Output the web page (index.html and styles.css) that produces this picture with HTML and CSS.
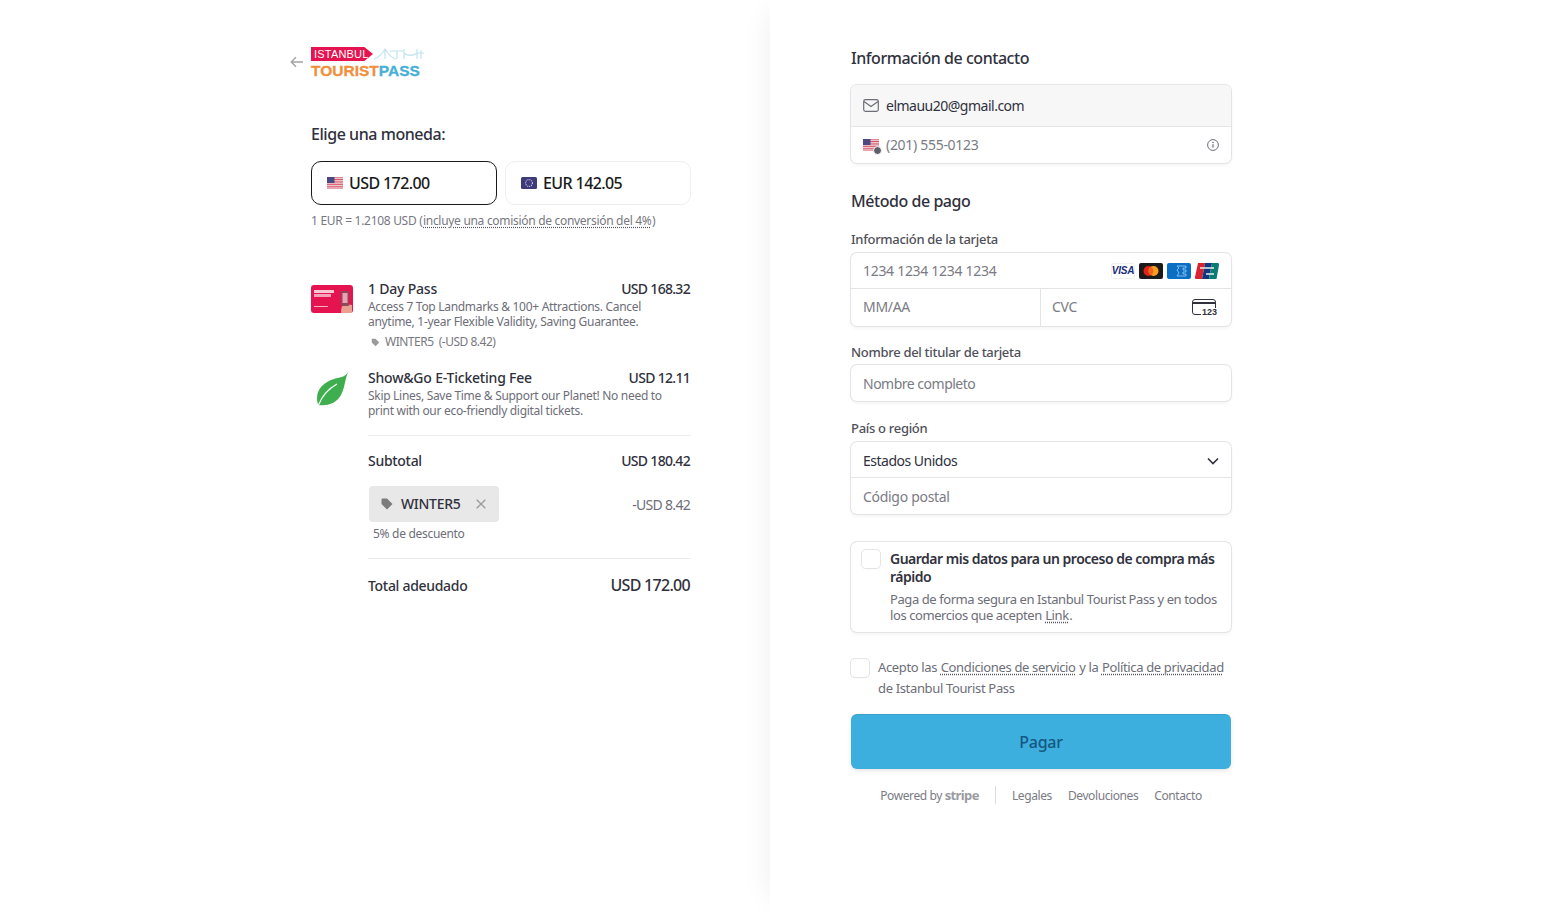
FILE: index.html
```html
<!DOCTYPE html>
<html lang="es">
<head>
  <meta charset="UTF-8" />
  <meta name="viewport" content="width=device-width, initial-scale=1.0" />
  <title>Istanbul Tourist Pass</title>
  <link rel="stylesheet" href="styles.css">
</head>
<body>
  <div class="checkout">
    <section class="summary">
      <div class="summary-inner">
        <header class="brand">
          <svg class="back" viewBox="0 0 14 12" width="14" height="12"><path d="M13 6H1.5M6 1.2 1.2 6 6 10.8" fill="none" stroke="#a3a3a3" stroke-width="1.4"/></svg>
          <div class="logo">
            <div class="logo-top">
              <span class="logo-flag">ISTANBUL</span>
              <svg viewBox="0 0 52 14" width="52" height="14"><path d="M1 12C6 11 9 7 12 2c3 5 6 9 11 10M12 2v10M17 4h14M24 4v8M31 2v10M44 2v10M31 6c4 3 9 3 13 0M44 6h7M48 3v9" fill="none" stroke="#bfe4f0" stroke-width="1.2"/></svg>
            </div>
            <div class="logo-bottom"><span class="logo-orange">TOURIST</span><span class="logo-blue">PASS</span></div>
          </div>
        </header>

        <h2 class="currency-title">Elige una moneda:</h2>
        <div class="currency-row">
          <button class="currency selected">
            <svg class="flag" viewBox="0 0 16 12" width="16" height="12"><use href="#us-flag"/></svg>
            USD 172.00
          </button>
          <button class="currency">
            <svg class="flag" viewBox="0 0 16 12" width="16" height="12">
              <rect width="16" height="12" rx="1.5" fill="#3f3b78"/>
              <circle cx="8" cy="6" r="3.4" fill="none" stroke="#c9c7e6" stroke-width="1.2" stroke-dasharray="1 1"/>
            </svg>
            EUR 142.05
          </button>
        </div>
        <p class="rate">1 EUR = 1.2108 USD (<span class="dotted">incluye una comisión de conversión del 4%</span>)</p>

        <div class="item first-item">
          <div class="thumb">
            <svg viewBox="0 0 42 28" width="42" height="28">
              <rect width="42" height="28" rx="3" fill="#e5134f"/>
              <rect x="3" y="5" width="20" height="3" fill="#f9c6d4"/>
              <rect x="3" y="9" width="17" height="3" fill="#f4a3bb"/>
              <rect x="3" y="21" width="14" height="1" fill="#f7b3c7"/>
              <path d="M30 28c0-5 1-8 3-9l8 1v8z" fill="#eaa08f"/>
              <rect x="30" y="6" width="8" height="15" rx="1" fill="#8b4a58"/>
              <rect x="31.5" y="8" width="5" height="10" fill="#e7a3b3"/>
            </svg>
          </div>
          <div class="item-body">
            <div class="item-head"><span>1 Day Pass</span><span class="price">USD 168.32</span></div>
            <p class="item-desc">Access 7 Top Landmarks &amp; 100+ Attractions. Cancel anytime, 1-year Flexible Validity, Saving Guarantee.</p>
            <p class="item-tag">
              <svg viewBox="0 0 12 12" width="9" height="9"><path d="M1 1h5l5 5-5 5-5-5z" fill="#9a9a9a"/></svg>
              WINTER5&nbsp; (-USD 8.42)
            </p>
          </div>
        </div>

        <div class="item second-item">
          <div class="thumb leaf">
            <svg viewBox="0 0 42 36" width="42" height="36">
              <path d="M37 1C34 6 30 6 23 8 13 11 6 18 6 27c0 3 .5 5 1.500 7C16 35 26 33 31 22 34 15 34 8 37 1z" fill="#3fae4f"/>
              <path d="M7.500 34C11 25 17 18 26 13" fill="none" stroke="#fff" stroke-width="1.200"/>
            </svg>
          </div>
          <div class="item-body">
            <div class="item-head"><span>Show&amp;Go E-Ticketing Fee</span><span class="price">USD 12.11</span></div>
            <p class="item-desc">Skip Lines, Save Time &amp; Support our Planet! No need to print with our eco-friendly digital tickets.</p>
          </div>
        </div>

        <div class="totals">
          <div class="total-row subtotal"><span>Subtotal</span><span class="price">USD 180.42</span></div>
          <div class="discount">
            <div>
              <span class="chip">
                <svg viewBox="0 0 12 12" width="12" height="12"><path d="M.5 1.500A1 1 0 0 1 1.500.5H6l5.500 5.500-5.500 5.500L.5 6z" fill="#7c7c7c"/></svg>
                <b>WINTER5</b>
                <svg viewBox="0 0 10 10" width="10" height="10"><path d="M.7.7l8.600 8.600M9.300.7.7 9.300" stroke="#9a9a9a" stroke-width="1.300"/></svg>
              </span>
              <p class="chip-note">5% de descuento</p>
            </div>
            <span class="discount-value price">-USD 8.42</span>
          </div>
          <div class="total-row grand"><span>Total adeudado</span><span class="grand-value">USD 172.00</span></div>
        </div>
      </div>
    </section>

    <section class="payment">
      <form class="payment-inner">
        <h2 class="section-title">Información de contacto</h2>
        <div class="box contact-box">
          <div class="row email-row">
            <svg viewBox="0 0 16 13" width="16" height="13"><rect x=".7" y=".7" width="14.600" height="11.600" rx="1.800" fill="none" stroke="#6d6e78" stroke-width="1.200"/><path d="M1 2.500l7 5 7-5" fill="none" stroke="#6d6e78" stroke-width="1.200"/></svg>
            <span class="email">elmauu20@gmail.com</span>
          </div>
          <div class="row phone-row">
            <span class="phone-flag">
              <svg viewBox="0 0 16 12" width="16" height="12"><use href="#us-flag"/></svg>
              <i class="flag-badge"></i>
            </span>
            <span class="placeholder grow">(201) 555-0123</span>
            <svg viewBox="0 0 12 12" width="12" height="12"><circle cx="6" cy="6" r="5.400" fill="none" stroke="#6d6e78"/><path d="M6 5.200v3.400" stroke="#6d6e78" stroke-width="1.200"/><circle cx="6" cy="3.500" r=".8" fill="#6d6e78"/></svg>
          </div>
        </div>

        <h2 class="section-title method-title">Método de pago</h2>
        <label class="field-label card-label">Información de la tarjeta</label>
        <div class="box card-box">
          <div class="row card-row card-number">
            <span class="placeholder grow">1234 1234 1234 1234</span>
            <span class="brands">
              <span class="brand-icon visa">VISA</span>
              <svg class="brand-svg" viewBox="0 0 24 16" width="24" height="16"><rect width="24" height="16" rx="2" fill="#1a1a1a"/><circle cx="9.500" cy="8" r="5" fill="#e2231a"/><circle cx="14.500" cy="8" r="5" fill="#f79e1b"/><path d="M12 3.700a5 5 0 0 1 0 8.600 5 5 0 0 1 0-8.600z" fill="#f2641d"/></svg>
              <svg class="brand-svg" viewBox="0 0 24 16" width="24" height="16"><rect width="24" height="16" rx="2" fill="#0a6fc4"/><path d="M10 3h9v2h-3v2h3v2h-3v2h3v2h-9l2-3-2-3 2-2z" fill="none" stroke="#9fd0f2" stroke-width=".8"/></svg>
              <svg class="brand-svg" viewBox="0 0 24 16" width="24" height="16"><path d="M3 0h7L7 16H1.500A1.500 1.500 0 0 1 0 14z" fill="#d9232e"/><path d="M10 0h7l-3 16H7z" fill="#12377f"/><path d="M17 0h5.500A1.500 1.500 0 0 1 24 2l-2.500 14H14z" fill="#0a7c74"/><path d="M5 5h14M11 11h8" stroke="#e8f2f2" stroke-width="1.400"/></svg>
            </span>
          </div>
          <div class="split">
            <div class="row card-row split-left"><span class="placeholder">MM/AA</span></div>
            <div class="row card-row cvc-row">
              <span class="placeholder grow">CVC</span>
              <span class="cvc-icon"><b>123</b></span>
            </div>
          </div>
        </div>

        <label class="field-label name-label">Nombre del titular de tarjeta</label>
        <div class="box name-box"><div class="row card-row"><span class="placeholder tight">Nombre completo</span></div></div>

        <label class="field-label country-label">País o región</label>
        <div class="box country-box">
          <div class="row card-row select-row">
            <span class="grow tight">Estados Unidos</span>
            <svg viewBox="0 0 12 8" width="12" height="8"><path d="M1 1.500l5 5 5-5" fill="none" stroke="#30313d" stroke-width="1.600"/></svg>
          </div>
          <div class="row card-row postal-row"><span class="placeholder">Código postal</span></div>
        </div>

        <div class="box save-box">
          <span class="checkbox"></span>
          <div>
            <p class="save-title">Guardar mis datos para un proceso de compra más rápido</p>
            <p class="save-text">Paga de forma segura en Istanbul Tourist Pass y en todos<br>los comercios que acepten <span class="dotted">Link</span>.</p>
          </div>
        </div>

        <div class="terms">
          <span class="checkbox"></span>
          <p>Acepto las <span class="dotted">Condiciones de servicio</span> y la <span class="dotted">Política de privacidad</span> de Istanbul Tourist Pass</p>
        </div>

        <button type="button" class="pay">Pagar</button>

        <footer class="foot">
          <span>Powered by <b class="stripe">stripe</b></span>
          <i class="foot-sep"></i>
          <span>Legales</span>
          <span>Devoluciones</span>
          <span>Contacto</span>
        </footer>
      </form>
    </section>
  </div>

  <svg class="defs" width="0" height="0">
    <symbol id="us-flag" viewBox="0 0 16 12">
      <rect width="16" height="12" rx="1" fill="#f4f4f6"/>
      <path d="M0 .8h16M0 2.500h16M0 4.200h16M0 5.900h16M0 7.600h16M0 9.300h16M0 11h16" stroke="#d8465a" stroke-width=".9"/>
      <rect width="7.500" height="6" fill="#4a4a80"/>
    </symbol>
  </svg>
</body>
</html>
```

FILE: styles.css
```css
* {
  box-sizing: border-box;
}
html, body {
  margin: 0;
  height: 100%;
}
body {
  font-family: "Noto Sans", "Open Sans", Arial, sans-serif;
  font-size: 14px;
  color: #30313d;
  background: #fff;
  letter-spacing: -0.3px;
  overflow: hidden;
}
h2, p {
  margin: 0;
}
.defs {
  position: absolute;
}
.checkout {
  display: flex;
  height: 911px;
}
.summary {
  width: 770px;
  display: flex;
  justify-content: flex-end;
  padding-right: 79px;
}
.summary-inner {
  width: 380px;
  padding-top: 47px;
}
.payment {
  flex: 1;
  padding-left: 81px;
  box-shadow: -15px 0 30px -15px rgba(0,0,0,0.07);
}
.payment-inner {
  width: 380px;
  padding-top: 47px;
}

/* brand */
.brand {
  position: relative;
  height: 31px;
}
.back {
  position: absolute;
  left: -21px;
  top: 9px;
}
.logo-top {
  display: flex;
  align-items: flex-start;
  height: 14px;
}
.logo-flag {
  background: #e5134f;
  color: #fff;
  font: 11px/14px "Liberation Sans", Arial, sans-serif;
  letter-spacing: 0.2px;
  padding: 0 9px 0 3px;
  width: 62px;
  white-space: nowrap;
  clip-path: polygon(0 0, 86% 0, 100% 50%, 86% 100%, 0 100%);
}
.logo-bottom {
  font: bold 15.5px/19px "Liberation Sans", Arial, sans-serif;
  letter-spacing: 0;
  white-space: nowrap;
  -webkit-text-stroke: 0.3px;
}
.logo-orange {
  color: #f0903c;
}
.logo-blue {
  color: #45b0d6;
}

/* currency */
.currency-title {
  font-size: 16px;
  font-weight: 500;
  line-height: 22px;
  letter-spacing: -0.45px;
  margin-top: 45px;
}
.currency-row {
  display: flex;
  gap: 8px;
  margin-top: 16px;
}
.currency {
  flex: 1;
  height: 44px;
  display: flex;
  align-items: center;
  gap: 6px;
  padding: 0 15px;
  background: #fff;
  border: 1px solid #eee;
  border-radius: 10px;
  font: 500 16px "Noto Sans", sans-serif;
  letter-spacing: -0.6px;
  color: #1a1a1a;
}
.currency.selected {
  border-color: #1a1a1a;
}
.rate {
  font-size: 12px;
  line-height: 16px;
  color: #77787f;
  margin-top: 8px;
}
.dotted {
  text-decoration: underline dotted #55565f;
  text-underline-offset: 2px;
  margin: 0 0.5px;
}

/* items */
.item {
  display: flex;
  gap: 15px;
}
.first-item {
  margin-top: 50px;
}
.second-item {
  margin-top: 18px;
}
.thumb {
  width: 42px;
  flex: none;
  padding-top: 6px;
  line-height: 0;
}
.thumb.leaf {
  padding-top: 3px;
}
.item-body {
  flex: 1;
}
.item-head {
  display: flex;
  justify-content: space-between;
  font-weight: 500;
  line-height: 20px;
  letter-spacing: -0.2px;
}
.price {
  letter-spacing: -0.7px;
  padding-right: 1px;
}
.item-desc {
  font-size: 12px;
  line-height: 15px;
  color: #6d6e78;
  max-width: 310px;
}
.item-tag {
  font-size: 12px;
  line-height: 16px;
  letter-spacing: -0.5px;
  color: #77787f;
  margin-top: 5px;
  display: flex;
  align-items: center;
  gap: 5px;
  padding-left: 3px;
}

/* totals */
.totals {
  margin-left: 57px;
  margin-top: 17px;
  border-top: 1px solid #ececec;
}
.total-row {
  display: flex;
  justify-content: space-between;
  align-items: center;
  font-weight: 500;
}
.subtotal {
  height: 20px;
  margin-top: 14px;
}
.discount {
  display: flex;
  justify-content: space-between;
  margin-top: 16px;
  padding-bottom: 16px;
  border-bottom: 1px solid #ececec;
}
.chip {
  display: inline-flex;
  align-items: center;
  gap: 8px;
  height: 36px;
  margin-left: 1px;
  padding: 0 13px 1px 12px;
  background: #e8e8e8;
  border-radius: 4px;
}
.chip b {
  font-weight: 500;
  margin-right: 8px;
}
.chip-note {
  font-size: 12px;
  line-height: 16px;
  color: #6d6e78;
  margin: 4px 0 0 5px;
}
.discount-value {
  color: #6d6e78;
  line-height: 38px;
  font-weight: 400;
}
.grand {
  height: 22px;
  margin-top: 15px;
}
.grand-value {
  font-size: 16px;
  letter-spacing: -0.7px;
  padding-right: 1px;
}

/* form */
.section-title {
  font-size: 16px;
  font-weight: 500;
  line-height: 22px;
  letter-spacing: -0.45px;
}
.box {
  background: #fff;
  border-radius: 6px;
  box-shadow: 0 0 0 1px #e4e4e6, 0 2px 4px rgba(0,0,0,0.06);
}
.contact-box {
  margin-top: 16px;
}
.row {
  display: flex;
  align-items: center;
}
.grow {
  flex: 1;
}
.tight {
  letter-spacing: -0.5px;
}
.placeholder {
  color: #7a7b84;
}
.email {
  letter-spacing: -0.5px;
}
.email-row {
  height: 42px;
  padding: 0 12px;
  gap: 7px;
  background: #f7f7f7;
  border-bottom: 1px solid #e4e4e6;
  border-radius: 6px 6px 0 0;
}
.phone-row {
  height: 36px;
  padding: 0 12px 1px;
  gap: 7px;
}
.phone-flag {
  position: relative;
  line-height: 0;
}
.flag-badge {
  position: absolute;
  right: -3px;
  bottom: -4px;
  width: 9px;
  height: 9px;
  border-radius: 50%;
  background: #5e5f68;
  border: 1.5px solid #fff;
}
.method-title {
  margin-top: 27px;
}
.field-label {
  display: block;
  font-size: 13px;
  font-weight: 500;
  line-height: 18px;
  color: #4f5059;
}
.card-label {
  margin-top: 18px;
}
.card-box {
  margin-top: 5px;
}
.card-row {
  height: 36px;
  padding: 0 12px;
  flex: 1;
}
.card-number {
  border-bottom: 1px solid #e4e4e6;
}
.select-row {
  border-bottom: 1px solid #e4e4e6;
  padding-top: 2px;
}
.split {
  display: flex;
}
.split > .card-row {
  width: 50%;
  height: 37px;
  flex: none;
  padding-bottom: 2px;
}
.split > .cvc-row {
  padding-left: 11px;
}
.split-left {
  border-right: 1px solid #e4e4e6;
}
.brands {
  display: flex;
  gap: 4px;
  line-height: 0;
}
.brand-icon {
  width: 24px;
  height: 16px;
  text-align: center;
  font: italic bold 10px/16px "Liberation Sans", Arial, sans-serif;
  letter-spacing: -0.2px;
  color: #1a2b7a;
  border-radius: 2px;
  box-shadow: inset 0 0 0 1px #f0f0f0;
}
.cvc-icon {
  position: relative;
  width: 24px;
  height: 16px;
  border: 1.5px solid #30313d;
  border-radius: 3px;
  margin-right: 3px;
  background: linear-gradient(#fff 2px, #30313d 2px, #30313d 4px, #fff 4px);
}
.cvc-icon b {
  position: absolute;
  right: -2px;
  bottom: -3px;
  padding-left: 1px;
  background: #fff;
  font: bold 9px/9px "Liberation Sans", Arial, sans-serif;
  letter-spacing: 0;
}
.name-label {
  margin-top: 17px;
}
.name-box {
  margin-top: 4px;
  height: 36px;
  display: flex;
}
.country-label {
  margin-top: 18px;
}
.country-box {
  margin-top: 5px;
}
.postal-row {
  flex: none;
}
.save-box {
  display: flex;
  gap: 10px;
  margin-top: 28px;
  padding: 8px 11px;
  height: 90px;
}
.checkbox {
  width: 18px;
  height: 18px;
  flex: none;
  border-radius: 4px;
  background: #fff;
  box-shadow: 0 0 0 1px #e4e4e6, 0 1px 2px rgba(0,0,0,0.06);
}
.save-title {
  font-weight: 600;
  line-height: 18px;
  letter-spacing: -0.5px;
}
.save-text {
  font-size: 13px;
  line-height: 16px;
  color: #6d6e78;
  margin-top: 5px;
  letter-spacing: -0.42px;
}
.terms {
  display: flex;
  gap: 9px;
  margin-top: 27px;
  font-size: 13px;
  line-height: 21px;
  letter-spacing: -0.35px;
  color: #6d6e78;
}
.terms p {
  margin-top: -2px;
}
.pay {
  display: block;
  width: 100%;
  height: 55px;
  margin-top: 15px;
  border: none;
  border-radius: 6px;
  background: #3dafdf;
  box-shadow: inset 0 1px 0 rgba(0,0,0,0.08), 0 2px 4px rgba(0,0,0,0.1);
  font: 500 16px "Noto Sans", sans-serif;
  letter-spacing: -0.3px;
  color: #14587f;
}
.foot {
  display: flex;
  align-items: center;
  justify-content: center;
  gap: 16px;
  margin-top: 17px;
  height: 18px;
  font-size: 12px;
  letter-spacing: -0.4px;
  color: #7a7b84;
}
.stripe {
  font-size: 13px;
  letter-spacing: -0.6px;
  color: #9a9ba2;
}
.foot-sep {
  width: 1px;
  height: 18px;
  background: #dcdcdf;
}
```
